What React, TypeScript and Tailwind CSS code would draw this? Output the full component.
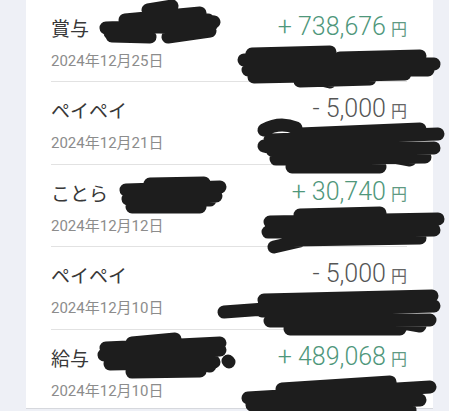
const ROWS = [
  { title: '賞与', date: '2024年12月25日', amount: '+ 738,676', plus: true },
  { title: 'ペイペイ', date: '2024年12月21日', amount: '- 5,000', plus: false },
  { title: 'ことら', date: '2024年12月12日', amount: '+ 30,740', plus: true },
  { title: 'ペイペイ', date: '2024年12月10日', amount: '- 5,000', plus: false },
  { title: '給与', date: '2024年12月10日', amount: '+ 489,068', plus: true },
];

// hand-drawn redaction marks, page coordinates
const SCRIBBLES = [
  // row 1
  'M106 28 L212 24 M110 33 L208 20 M125 20 L200 13 M148 10 L172 6 M112 36 L150 37 M168 37 L210 31 M128 26 L190 28 M180 18 L214 22',
  'M244 60 L434 64 M248 70 L428 70 M254 77 L405 74 M262 66 L330 82 M300 81 L370 79 M252 54 L330 52 M340 58 L420 56',
  // row 2
  'M264 130 Q280 121 296 128 M270 140 L438 134 M272 150 L434 148 M276 159 L425 157 M292 167 L380 167 M300 134 L420 129 M264 146 L300 155 M320 143 L410 160',
  // row 3
  'M126 190 L220 187 M128 199 L216 196 M132 207 L200 207 M150 184 L204 183 M140 195 L210 200',
  'M270 222 L438 219 M268 232 L434 230 M292 240 L420 238 M274 247 L300 241 M300 215 L380 213 M310 227 L420 235',
  // row 4
  'M224 312 L265 309 M264 300 L432 296 M262 311 L434 306 M270 321 L430 320 M290 329 L400 329 M300 303 L360 326 M340 312 L420 326',
  // row 5
  'M104 355 L220 350 M110 364 L214 362 M132 372 L200 371 M132 343 L175 339 M180 345 L220 343 M106 348 L150 346 M150 356 L210 366',
  'M248 398 L430 387 M252 405 L420 400 M272 410 L410 410 M282 389 L390 382 M300 396 L410 396 M228 361 L229 362',
];

export default function App() {
  return (
    <div className="relative w-[449px] h-[411px] overflow-hidden bg-[#eef0f6] flex font-[Roboto,'Noto_Sans_CJK_JP',sans-serif]">
      <div className="w-[26px] shrink-0" />
      <div className="w-[407px] h-[409px] bg-white border-b border-[#d6d8dd] pl-[25px] pr-[26px]">
        {ROWS.map((r, i) => (
          <div
            key={i}
            className={`flex justify-between h-[82.5px] ${i === 0 ? '-mt-[0.5px]' : ''} ${i < ROWS.length - 1 ? 'border-b border-[#e2e2e2]' : ''}`}
          >
            <div className="pt-[17px]">
              <div className="text-[19px] leading-[26px] text-[#383838]">{r.title}</div>
              <div className="mt-[8px] text-[15px] leading-[20px] text-[#8c8c8c]">{r.date}</div>
            </div>
            <div className={`pt-[11px] flex items-baseline ${r.plus ? 'text-[#4f977b]' : 'text-[#555555]'}`}>
              <span className="text-[25px] font-light leading-[32px]">{r.amount}</span>
              <span className={`ml-[5px] text-[16px] ${r.plus ? 'text-[#5f9a83]' : 'text-[#666666]'}`}>円</span>
            </div>
          </div>
        ))}
      </div>
      <svg className="absolute inset-0 pointer-events-none" width="449" height="411" viewBox="0 0 449 411">
        {SCRIBBLES.map((d, i) => (
          <path key={i} d={d} fill="none" stroke="#1d1d1d" strokeWidth="13" strokeLinecap="round" strokeLinejoin="round" />
        ))}
      </svg>
    </div>
  );
}
